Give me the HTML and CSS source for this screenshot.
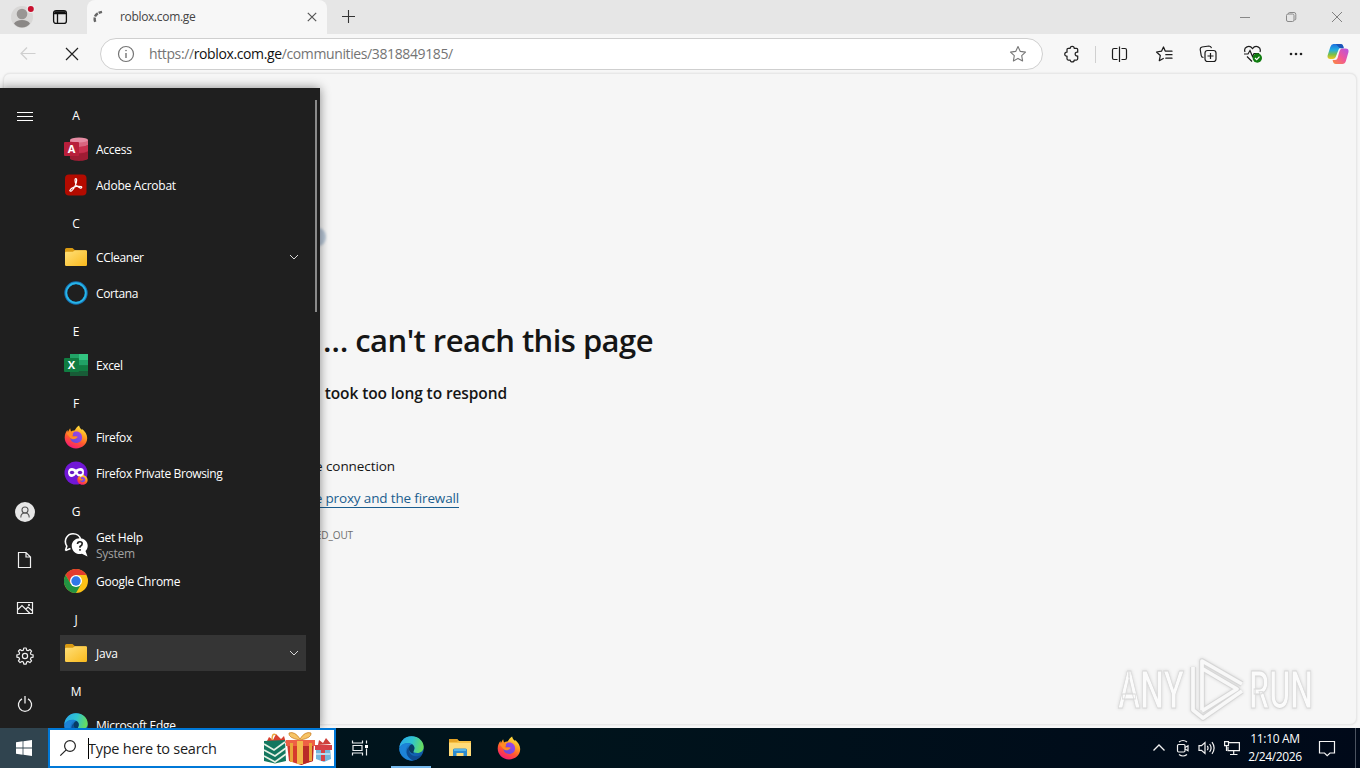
FILE: index.html
```html
<!DOCTYPE html>
<html lang="en">
<head>
<meta charset="utf-8">
<title>roblox.com.ge</title>
<link rel="stylesheet" href="styles.css">
</head>
<body>
<svg class="defs" aria-hidden="true">
  <defs>
    <linearGradient id="gFolder" x1="0" y1="0" x2="1" y2="1"><stop offset="0" stop-color="#ffe07a"/><stop offset="1" stop-color="#f9b91c"/></linearGradient>
    <linearGradient id="gFox" x1=".8" y1="0" x2=".3" y2="1"><stop offset="0" stop-color="#fff04a"/><stop offset=".35" stop-color="#ffa51f"/><stop offset=".65" stop-color="#ff5630"/><stop offset="1" stop-color="#f5157a"/></linearGradient>
    <linearGradient id="gFoxIn" x1="1" y1="0" x2="0" y2="1"><stop offset="0" stop-color="#a842e8"/><stop offset="1" stop-color="#5a4fd8"/></linearGradient>
    <linearGradient id="gEdgeTop" x1="0" y1=".3" x2="1" y2=".5"><stop offset="0" stop-color="#2aa9ea"/><stop offset=".5" stop-color="#2fc4cf"/><stop offset="1" stop-color="#6ade58"/></linearGradient>
    <linearGradient id="gEdgeLow" x1="0" y1="0" x2="1" y2="1"><stop offset="0" stop-color="#1f8fe0"/><stop offset="1" stop-color="#0c4e9c"/></linearGradient>
    <linearGradient id="gCopA" x1="0" y1="0" x2="0" y2="1"><stop offset="0" stop-color="#1c6fe0"/><stop offset=".4" stop-color="#22aee0"/><stop offset=".7" stop-color="#7cc04a"/><stop offset="1" stop-color="#f5c81e"/></linearGradient>
    <linearGradient id="gCopB" x1="1" y1="0" x2="0" y2="1"><stop offset="0" stop-color="#b253e6"/><stop offset=".5" stop-color="#f0569a"/><stop offset="1" stop-color="#fb8c3c"/></linearGradient>
  </defs>
  <symbol id="folder" viewBox="0 0 24 24"><path d="M1 4.500q0-1.500 1.500-1.500h6l2.500 2.200h10.500q1.500 0 1.500 1.500V12H1z" fill="#d99a12"/><path d="M1 8q0-1.200 1.300-1.200h6.500l2.200-1.500h10.700q1.300 0 1.300 1.300v13.200q0 1.200-1.200 1.200H2.200q-1.200 0-1.200-1.200z" fill="url(#gFolder)"/></symbol>
  <symbol id="down" viewBox="0 0 12 12"><path d="M2 4l4 4 4-4" fill="none" stroke="#d8d8d8" stroke-width="1"/></symbol>
  <symbol id="firefox" viewBox="0 0 24 24"><path d="M12 23.500C5.600 23.500.7 18.600.7 12.600c0-3.400 1.200-5.900 2.700-7.700l.5 2 2.200-3.700.9 3.300c1-.7 2.300-1 3.500-.9 1.300-2 2.400-3.800 4.600-5.100.5 2.300 1.600 3.300 3 4.400l.2-1c2.700 2.400 4.900 5.500 4.900 9.200 0 6-5 10.400-11.200 10.400z" fill="url(#gFox)"/><path d="M10.500 6.700c4.200-1.200 7.600 1.500 7.600 5.800 0 3.200-2.600 5.500-5.800 5.500-3.500 0-5.800-2.200-6-5.200 1.200 1 2.600 1.300 4.100.7 1.200-.5 2-1.400 3.200-1.800-1-.5-2.600-.5-4.700-.5-.6-1.900.1-3.600 1.600-4.500z" fill="url(#gFoxIn)"/><path d="M2.500 8.300C5 7.300 8 7.700 9.300 9.300c-1 .3-1.400 1-1.500 2 1.800.8 4 .3 6 .5-1.300 1.800-4.100 3.900-7.400 1.300" fill="#ff8b25"/></symbol>
  <symbol id="edge" viewBox="0 0 24 24"><circle cx="12" cy="12" r="11.700" fill="url(#gEdgeLow)"/><path d="M.4 11.200C1 4.900 5.900.3 12 .3c6.700 0 11.700 4.800 11.700 10.100 0 3.900-2.800 6-6.100 6-2.300 0-4-.8-4-1.700 0-.8 1.200-1.100 1.200-3.200 0-2.500-2.800-4.700-6.200-4.700-4 0-7 2-8.200 4.400z" fill="url(#gEdgeTop)"/><path d="M8.600 9c-4 3.500-2.300 11.500 5.200 14.400C7.500 24.300.4 19.300.3 12 1.500 9 4.500 7 8.300 6.900c1.500 0 2.900.5 4 1.200-1.500-.1-2.700.2-3.700.9z" fill="#1d83d8"/><path d="M10.200 10c-2 4.300.9 9.100 5.700 9.500 2.500.2 4.400-.6 6-1.700-2 3.600-5.300 5.500-8.500 5.600C6.700 20.500 5.600 12.500 10.200 10z" fill="#0e4b92"/><path d="M14.800 11.500c0-1.400-.9-2.700-2.300-3.600-3.100.7-3.900 4.700-1.800 7.300 1 1.200 2.500 1.800 3.900 1.500-2-1.300.2-2.100.2-5.200z" fill="#073b64"/></symbol>
</svg>

<div class="screen">
  <div class="browser">
    <div class="tabstrip">
      <div class="profile">
        <svg width="26" height="26" viewBox="0 0 26 26"><circle cx="13" cy="13" r="11" fill="#d8d7d6"/><circle cx="13" cy="10" r="5.300" fill="#999694"/><path d="M5 19.500q2-3.500 8-3.500t8 3.500q-3 4-8 4t-8-4z" fill="#8b8886"/><circle cx="21.800" cy="5" r="4.100" fill="#ededed"/><circle cx="21.800" cy="5" r="3" fill="#c8102e"/></svg>
      </div>
      <svg class="workspace" width="16" height="16" viewBox="0 0 16 16" fill="none" stroke="#111" stroke-width="1.300"><rect x="1.600" y="1.600" width="12.800" height="12.800" rx="2.500"/><path d="M2 4.500h12M5.500 5v9" /><path d="M2.500 3.200h11" stroke-width="2"/></svg>
      <div class="tab">
        <svg width="14" height="14" viewBox="0 0 14 14"><path d="M3.200 11.800Q.6 4 10 1.800" fill="none" stroke="#666" stroke-width="2.400" stroke-dasharray="4.300 1"/></svg>
        <span class="tab-title">roblox.com.ge</span>
        <svg class="tab-close" width="10" height="10" viewBox="0 0 10 10"><path d="M.8.8l8.400 8.400M9.200.8L.8 9.200" stroke="#555" stroke-width="1.200"/></svg>
      </div>
      <svg class="newtab" width="14" height="14" viewBox="0 0 14 14"><path d="M6.500 0v13M0 6.500h13" stroke="#333" stroke-width="1.100"/></svg>
      <div class="winbtns">
        <svg width="12" height="12" viewBox="0 0 12 12"><path d="M1 6.500h10" stroke="#888"/></svg>
        <svg width="12" height="12" viewBox="0 0 12 12" fill="none" stroke="#8a8a8a" stroke-width="1"><rect x="1.500" y="3" width="7.500" height="7.500" rx="1.500"/><path d="M3.500 3V2.500q0-1 1-1H9q1.800 0 1.800 1.800V8q0 1-1.300 1"/></svg>
        <svg width="12" height="12" viewBox="0 0 12 12"><path d="M1 1l10 10M11 1L1 11" stroke="#808080" stroke-width="1"/></svg>
      </div>
    </div>

    <div class="toolbar">
      <svg class="back" width="16" height="14" viewBox="0 0 16 14" fill="none" stroke="#cfcfcf" stroke-width="1.200"><path d="M15.500 6.500H1M7 .5l-6 6 6 6"/></svg>
      <svg class="stop" width="14" height="14" viewBox="0 0 14 14"><path d="M1 1l12 12M13 1L1 13" stroke="#222" stroke-width="1.200"/></svg>
      <div class="address">
        <svg width="18" height="18" viewBox="0 0 18 18" fill="none" stroke="#747474" stroke-width="1.200"><circle cx="9" cy="9" r="7.500"/><path d="M9 8v5" stroke-width="1.400"/><circle cx="9" cy="5.600" r=".5" fill="#747474" stroke-width=".6"/></svg>
        <span class="url">https://<b>roblox.com.ge</b>/communities/3818849185/</span>
        <svg class="star" width="18" height="18" viewBox="0 0 18 18" fill="none" stroke="#777" stroke-width="1.100" stroke-linejoin="round"><path d="M9 1.600l2.300 4.800 5.200.7-3.800 3.600.9 5.200L9 13.400l-4.600 2.500.9-5.200L1.500 7.100l5.200-.7z"/></svg>
      </div>
      <div class="actions">
        <svg class="a1" width="18" height="18" viewBox="0 0 18 18" fill="none" stroke="#222" stroke-width="1.250" stroke-linejoin="round"><path d="M5.200 3.300h2C7.200.6 11.200.6 11.200 3.300h2.300q1.200 0 1.200 1.200v2.700c-3.200-.8-3.600 4.300 0 3.800v2.800q0 1.200-1.200 1.200h-2.300c0 2.600-4 2.600-4 0h-2Q4 15 4 13.800v-2.600c-3 .4-3-4.400 0-4V4.500q0-1.200 1.200-1.200z"/></svg>
        <i class="divider"></i>
        <svg class="a2" width="18" height="18" viewBox="0 0 18 18" fill="none" stroke="#1c1c1c" stroke-width="1.200"><path d="M6.500 3.500H3Q1.500 3.500 1.500 5v8q0 1.500 1.500 1.500h3.500M10.500 3.500H14q1.500 0 1.500 1.500v8q0 1.500-1.500 1.500h-3.500M8.500 1.500v15.500"/></svg>
        <svg class="a3" width="18" height="18" viewBox="0 0 18 18" fill="none" stroke="#1c1c1c" stroke-width="1.250" stroke-linejoin="round" stroke-linecap="round"><path d="M12.500 6.200L10.200 6 8.500 2 6.500 6.200 1.500 7l3.800 3.500-1 5.200 4-2.200M10.500 6.200H17M10.800 9.700H17M10.800 13.200H17"/></svg>
        <svg class="a4" width="18" height="18" viewBox="0 0 18 18" fill="none" stroke="#1c1c1c" stroke-width="1.200"><rect x="6" y="5.500" width="11" height="11" rx="2.500"/><path d="M11.500 8v6M8.500 11h6M4.500 12.500Q2.500 12.500 2.200 10.500L1.200 4.500Q1 2.500 3 2l7-1q2 0 2.500 2.200"/></svg>
        <svg class="a5" width="20" height="18" viewBox="0 0 20 18" fill="none" stroke="#1c1c1c" stroke-width="1.200"><path d="M2 7C.2 2 6.500-.5 9.500 3.600 12.600-.5 18.600 2 17 7M1 9h4l2-3.500 2.500 6 1.500-3h5M4 11.500l5 5"/><circle cx="14.300" cy="13" r="4.700" fill="#107c10" stroke="none"/><path d="M12 13l1.700 1.600 2.800-3" stroke="#fff"/></svg>
        <svg class="a6" width="16" height="4" viewBox="0 0 16 4" fill="#222"><circle cx="3" cy="2" r="1.300"/><circle cx="8" cy="2" r="1.300"/><circle cx="13" cy="2" r="1.300"/></svg>
        <svg class="a7" width="22" height="22" viewBox="0 0 22 22"><path d="M6.500 1h7q2 0 2.600 2l.5 1.700h-2.500q-2 0-2.600 2L9.100 13q-.8 3-3.600 3H3.200Q0 16 .6 12.600L3.300 4Q4.300 1 6.500 1z" fill="url(#gCopA)"/><path d="M12 5.500h6.500q3.500 0 3 3.400L18.900 18q-.9 3-3.500 3H8.700q-2 0-2.600-2l-.5-2h2.600q1.800 0 2.400-2l1.800-6.500q.6-2 2-3z" fill="url(#gCopB)"/><path d="M8.800 1h4.800q2 0 2.600 2l.6 2.300h-4z" fill="#1b55b8"/></svg>
      </div>
    </div>

    <div class="page">
      <div class="art"></div>
      <h1>… can't reach this page</h1>
      <p class="reason">took too long to respond</p>
      <p class="hint">e connection</p>
      <p class="hint link"><a>e proxy and the firewall</a></p>
      <p class="code">ED_OUT</p>
      <svg class="watermark" width="206" height="68" viewBox="0 0 206 68">
        <g fill="#fbfbfb" stroke="#d9d9d9" stroke-width="1"><text x="3" y="53" textLength="66" lengthAdjust="spacingAndGlyphs">ANY</text><text x="134" y="53" textLength="64" lengthAdjust="spacingAndGlyphs">RUN</text></g>
        <g fill="none" stroke-linejoin="round"><path d="M78 12V55L88 63L127 36M87 55V6L127 29M88 14L122 34L87 56" stroke="#d6d6d6" stroke-width="5.500"/><path d="M78 12V55L88 63L127 36M87 55V6L127 29M88 14L122 34L87 56" stroke="#f8f8f8" stroke-width="3.700"/></g>
      </svg>
    </div>
  </div>

  <div class="taskbar">
    <div class="start"><svg width="16" height="16" viewBox="0 0 16 16" fill="#fff"><path d="M0 2.200L6.600 1.300v6.300H0zM7.400 1.200L16 0v7.600H7.400zM0 8.400h6.600v6.300L0 13.800zM7.400 8.400H16V16l-8.600-1.200z"/></svg></div>
    <div class="search">
      <svg width="18" height="18" viewBox="0 0 18 18" fill="none" stroke="#222" stroke-width="1.200"><circle cx="11" cy="7" r="5.400"/><path d="M7.200 10.800L1.300 16.700"/></svg>
      <span class="query">Type here to search</span>
      <svg class="gifts" width="70" height="36" viewBox="0 0 70 36">
        <path d="M3 13l3-6 4 3 3-6 5 5 3-3 2 7z" fill="#d8402f"/><path d="M9 10q0-8 4-5" fill="none" stroke="#e9a23b" stroke-width="1.500"/>
        <path d="M1 11l21-1 1 21-11 2.500L1 31z" fill="#14775f"/><path d="M1 14l10 6 11-8M1 20l11 6 11-8M1 26l11 6 11-8" fill="none" stroke="#e6f1e4" stroke-width="1.700"/>
        <path d="M24 13h27l-1 18-12 4-12-4z" fill="#d63a2d"/><path d="M38 15v20l12-4V14z" fill="#b92a28"/><path d="M23 10h29v6H23z" fill="#ee6045"/>
        <path d="M34 11h6v23h-6z" fill="#f2b64b"/><path d="M27 13h3v19h-3zM46 13h3v18h-3z" fill="#e9a53a"/><path d="M37 10Q25 8 26 3q6-2 11 6 5-8 11-6 1 5-11 7z" fill="#f6c465" stroke="#cc7f24" stroke-width=".8"/>
        <path d="M53 17h14l1 12-7 3-8-3z" fill="#72b7dc"/><path d="M52 15h17v5H52z" fill="#d54146"/><path d="M58 16h4v15h-4z" fill="#d64348"/><path d="M55 15l1-5 4 3 3-5 5 6z" fill="#ce403b"/><path d="M53 24h14" stroke="#b5dbef" stroke-width="2"/>
      </svg>
    </div>
    <div class="apps">
      <div class="app"><svg width="18" height="18" viewBox="0 0 18 18" fill="none" stroke="#e9edef" stroke-width="1.200"><path d="M1.500 1.500v2.500h10V1.500M1.500 16.500V14h10v2.500M2 6.500h9v5H2zM15.500 1.500v3M15.500 9.500v7"/><path d="M14 6h3v3h-3z" fill="#fff" stroke="none"/></svg></div>
      <div class="app active"><svg width="25" height="25"><use href="#edge"/></svg></div>
      <div class="app"><svg width="24" height="20" viewBox="0 0 24 20"><path d="M1 1h8l2 2h12v15H1z" fill="#f6c044"/><path d="M1 5h22v13H1z" fill="#ffdb79"/><path d="M1 1h8l1.500 1.500L9 4H1z" fill="#e5a224"/><path d="M5 18v-6q0-1.500 1.500-1.500h11Q19 10.500 19 12v6h-3.500v-3h-7v3z" fill="#2c8bcf"/><path d="M6 11h12v2H6z" fill="#56b5e9"/></svg></div>
      <div class="app"><svg width="24" height="24"><use href="#firefox"/></svg></div>
    </div>
    <div class="tray">
      <svg width="14" height="14" viewBox="0 0 14 14" fill="none" stroke="#f2f2f2" stroke-width="1.300"><path d="M1.500 9.500L7 4l5.500 5.500"/></svg>
      <svg width="14" height="18" viewBox="0 0 14 18" fill="none" stroke="#f2f2f2" stroke-width="1.200"><rect x="1.500" y="5.500" width="7.500" height="7.500" rx="1.200"/><path d="M9 8.500l3-1.700v5L9 10M3 3q4-3 8 0M3 15.500q4 3 8 0"/></svg>
      <svg width="18" height="16" viewBox="0 0 18 16" fill="none" stroke="#f2f2f2" stroke-width="1.200"><path d="M1 5.700h2.500L7 2.500v11L3.500 10.300H1zM9.300 5.800q1.500 2.200 0 4.400M11.600 4q3 4 0 8M14 2.200q4.200 5.800 0 11.600"/></svg>
      <svg class="net" width="18" height="16" viewBox="0 0 18 16" fill="none" stroke="#f2f2f2" stroke-width="1.200"><path d="M6 2.600h10.400v8H5V7M10.700 11v3.500M7 14.500h7.500"/><path d="M1.600 1.600h3.900v4H1.600zM3.500 5.500v5.500"/></svg>
      <div class="clock"><span class="time">11:10 AM</span><span class="date">2/24/2026</span></div>
      <svg class="notify" width="18" height="18" viewBox="0 0 18 18" fill="none" stroke="#f5f5f5" stroke-width="1.200"><path d="M1.500 2.500h15V14H12l-2.800 2.700L6.500 14h-5z"/></svg>
      <i class="peek"></i>
    </div>
  </div>

  <div class="menu">
    <div class="rail">
      <svg class="burger" width="16" height="12" viewBox="0 0 16 12"><path d="M0 1.500h16M0 5.500h16M0 9.500h16" stroke="#fff" stroke-width="1"/></svg>
      <div class="rail-item"><svg width="20" height="20" viewBox="0 0 20 20"><circle cx="10" cy="10" r="10" fill="#e6e6e6"/><g fill="none" stroke="#555" stroke-width="1.100"><circle cx="10" cy="8" r="3"/><path d="M5.800 15.500q0-4.500 4.200-4.500t4.200 4.500"/></g></svg></div>
      <div class="rail-item"><svg width="16" height="18" viewBox="0 0 16 18" fill="none" stroke="#f0f0f0" stroke-width="1.200"><path d="M1.500 1.500H9L13.500 6v10.500h-12zM9 1.500V6h4.500"/></svg></div>
      <div class="rail-item"><svg width="18" height="14" viewBox="0 0 18 14" fill="none" stroke="#f0f0f0" stroke-width="1.200"><path d="M1.500 1.500h15v11h-15zM1.500 9L6 4.500l8 8M10 8l2-2 4.500 4"/><circle cx="13" cy="4" r=".5"/></svg></div>
      <div class="rail-item"><svg width="18" height="18" viewBox="0 0 18 18" fill="none" stroke="#f0f0f0" stroke-width="1.200" stroke-linejoin="round"><path d="M7.800 1h2.400l.4 2.100 1.500.6 1.800-1.200 1.700 1.700-1.200 1.800.6 1.500 2.100.4v2.300l-2.100.4-.6 1.500 1.200 1.800-1.700 1.700-1.800-1.200-1.500.6-.4 2.100H7.800l-.4-2.100-1.500-.6-1.800 1.200-1.700-1.700 1.200-1.800-.6-1.500-2.100-.4V7.900L3 7.500 3.600 6 2.400 4.200l1.700-1.700 1.800 1.200 1.500-.6z"/><circle cx="9" cy="9" r="2.600"/></svg></div>
      <div class="rail-item"><svg width="18" height="18" viewBox="0 0 18 18" fill="none" stroke="#f0f0f0" stroke-width="1.300"><path d="M6 3.900a6.600 6.600 0 1 0 6 0M9 1v7.500"/></svg></div>
    </div>
    <div class="list">
      <div class="head">A</div>
      <div class="row"><svg width="24" height="24" viewBox="0 0 24 24"><path d="M6 3v18c0 3.500 18 3.500 18 0V3z" fill="#b5243f"/><path d="M6 3v5c4 2.600 14 2.600 18 0V3z" fill="#d9657f"/><path d="M6 8c4 2.600 14 2.600 18 0v6c-4 2.600-14 2.600-18 0z" fill="#c8304e"/><path d="M6 14.500c4 2.600 14 2.600 18 0V21c0 3.500-18 3.500-18 0z" fill="#9e1c33"/><ellipse cx="15" cy="3" rx="9" ry="2.600" fill="#e58ba2"/><rect y="5" width="15" height="14" rx="1" fill="#b81f3b"/><text class="glyph" x="7.500" y="16">A</text></svg><span>Access</span></div>
      <div class="row"><svg width="24" height="24" viewBox="0 0 24 24"><rect x="1" y="1.500" width="21.500" height="21" rx="4" fill="#b30b00"/><path d="M6 17c1-2 6-4.500 11-3.500 1.500.6.500 2-1 1.400-3-1-5-4.500-5-7.900 0-1.800 1.700-1.800 1.700 0 0 3-2.700 9.200-5 10.700-1.300.8-2.300.4-1.700-.7z" fill="none" stroke="#fff" stroke-width="1.200"/></svg><span>Adobe Acrobat</span></div>
      <div class="head">C</div>
      <div class="row"><svg width="24" height="24"><use href="#folder"/></svg><span class="tight">CCleaner</span><svg class="chev" width="12" height="12"><use href="#down"/></svg></div>
      <div class="row"><svg width="24" height="24" viewBox="0 0 24 24" fill="none"><circle cx="12" cy="12" r="10.200" stroke="#1673b5" stroke-width="3"/><circle cx="12" cy="12" r="9.800" stroke="#27b6e8" stroke-width="1.700"/></svg><span class="tight">Cortana</span></div>
      <div class="head">E</div>
      <div class="row"><svg width="24" height="24" viewBox="0 0 24 24"><path d="M6 1h18v22H6z" fill="#185c37"/><path d="M6 1h9v7H6z" fill="#21a366"/><path d="M15 1h9v6h-9z" fill="#33c481"/><path d="M15 7h9v5.500h-9z" fill="#21a366"/><path d="M15 12.500h9V18h-9z" fill="#107c41"/><rect y="5" width="15" height="14" rx="1" fill="#107c41"/><text class="glyph" x="7.500" y="16">X</text></svg><span class="tight">Excel</span></div>
      <div class="head">F</div>
      <div class="row"><svg width="24" height="24"><use href="#firefox"/></svg><span class="tight">Firefox</span></div>
      <div class="row"><svg width="24" height="24" viewBox="0 0 24 24"><circle cx="12" cy="12" r="11.500" fill="#7117d6"/><path d="M4 11q.5-4 4-4 2 0 4 1.500Q14 7 16.500 7q3.500 0 3.500 4 0 5-3.800 5-2.200 0-4.200-2.800Q10 16 8 16q-4 0-4-5z" fill="#fff"/><ellipse cx="8" cy="11.500" rx="2.200" ry="1.700" fill="#6b1bc4"/><ellipse cx="16" cy="11.500" rx="2.200" ry="1.700" fill="#6b1bc4"/><svg x="13" y="13" width="11" height="11"><use href="#firefox"/></svg></svg><span class="tight">Firefox Private Browsing</span></div>
      <div class="head">G</div>
      <div class="row"><svg width="24" height="24" viewBox="0 0 24 24"><path d="M1.500 17.500l1.300-4.300C-1 7 3.500.8 9 .8c4 0 7 2.500 7.600 5.700" fill="none" stroke="#fff" stroke-width="1.600"/><path d="M1.500 17.500l5-2" stroke="#fff" stroke-width="1.600"/><path d="M15.700 5.200c4.500 0 8 3.400 8 7.500 0 2.200-.9 4-2.200 5.400l2 5.400-5.600-2.700c-5.300 1.500-10.200-2.500-10.200-8 0-4.200 3.600-7.600 8-7.600z" fill="#fff"/><path d="M13.500 11q0-2.300 2.400-2.300 2.300 0 2.300 2 0 1.600-2.200 2.800v1.300M16 16v1.700" fill="none" stroke="#1f1f1f" stroke-width="1.600"/></svg><span class="two">Get Help<small>System</small></span></div>
      <div class="row"><svg width="24" height="24" viewBox="0 0 24 24"><circle cx="12" cy="12" r="12" fill="#fbc116"/><path d="M1.600 6A12 12 0 0 1 22.400 6H12L6.800 15z" fill="#e33b2e"/><path d="M1.600 6A12 12 0 0 0 12 24l5.200-9H6.800z" fill="#229342"/><circle cx="12" cy="12" r="6" fill="#fff"/><circle cx="12" cy="12" r="4.700" fill="#2f77e8"/></svg><span>Google Chrome</span></div>
      <div class="head">J</div>
      <div class="row hover"><svg width="24" height="24"><use href="#folder"/></svg><span>Java</span><svg class="chev" width="12" height="12"><use href="#down"/></svg></div>
      <div class="head">M</div>
      <div class="row"><svg width="24" height="24"><use href="#edge"/></svg><span>Microsoft Edge</span></div>
    </div>
    <i class="scroll"></i>
  </div>
</div>
</body>
</html>
```
FILE: styles.css
```css
* { box-sizing: border-box; }
body { margin: 0; font-family: "Open Sans", "Noto Sans", sans-serif; overflow: hidden; }
svg { display: block; flex: none; }
.defs { position: absolute; width: 0; height: 0; }
.screen { position: relative; width: 1360px; height: 768px; display: flex; flex-direction: column; overflow: hidden; }

/* Browser window */
.browser { flex: 1; display: flex; flex-direction: column; background: #f7f7f7; min-height: 0; }
.tabstrip { height: 34px; background: #e6e6e6; display: flex; align-items: center; flex: none; }
.profile { margin-left: 9px; }
.workspace { margin: 0 19px 0 17px; }
.tab { width: 240px; height: 34px; background: #f7f7f7; border-radius: 8px 8px 0 0; display: flex; align-items: center; padding: 0 10px 0 5px; }
.tab-title { font-size: 12px; letter-spacing: -0.33px; color: #444; margin-left: 14px; padding-bottom: 1px; }
.tab-close { margin-left: auto; }
.newtab { margin-left: 15px; }
.winbtns { margin-left: auto; display: flex; gap: 34px; padding-right: 17px; }

.toolbar { height: 40px; display: flex; align-items: center; flex: none; }
.back { margin-left: 20px; }
.stop { margin: 0 21px 0 29px; }
.address { width: 943px; height: 32px; border: 1px solid #cfcfcf; border-radius: 16px; background: #fff; display: flex; align-items: center; padding: 0 15px 0 16px; }
.url { font-size: 14px; letter-spacing: -0.38px; color: #747474; margin-left: 14px; padding-bottom: 1px; }
.url b { font-weight: 400; color: #111; }
.star { margin-left: auto; }
.actions { display: flex; align-items: center; flex: 1; padding-left: 20px; }
.divider { width: 1px; height: 17px; background: #d0d0d0; margin: 0 15px 0 14px; }
.a3 { margin-left: 26px; }
.a4 { margin-left: 26px; }
.a5 { margin-left: 26px; }
.a6 { margin-left: 25px; }
.a7 { margin-left: 23px; }

.page { position: relative; flex: 1; margin: -1px 3px 3px; border: 1px solid #e8e8e8; border-radius: 7px; background: #f6f6f6; box-shadow: 0 0 2px #ddd; padding-top: 150px; color: #151515; min-height: 0; }
.page h1, .page p { margin: 0; text-align: right; white-space: nowrap; }
.art { width: 14px; height: 18px; margin: 4px 0 0 308px; background: #bac8d8; border-radius: 50%; filter: blur(1px); }
.page h1 { width: 649px; font-size: 31px; line-height: 40px; font-weight: 600; letter-spacing: -0.55px; margin-top: 74px; }
.page .reason { width: 503px; font-size: 15.500px; line-height: 22px; font-weight: 600; margin-top: 22px; letter-spacing: -0.1px; }
.page .hint { width: 391px; font-size: 13.500px; line-height: 20px; margin-top: 52px; letter-spacing: -0.08px; }
.page .link { width: 455px; margin-top: 12px; letter-spacing: -0.15px; }
.link a { display: inline-block; color: #1b5e8f; border-bottom: 1px solid #1b5e8f; line-height: 18px; }
.page .code { width: 349px; font-size: 10px; line-height: 16px; color: #6e6e6e; margin-top: 19px; letter-spacing: -0.1px; }
.watermark { position: absolute; right: 35px; bottom: 1px; font: 500 51px Roboto, sans-serif; filter: drop-shadow(0 0 1.500px #d4d4d4); }

/* Taskbar */
.taskbar { height: 40px; flex: none; display: flex; background: linear-gradient(90deg, #00141d 0, #00141c 40%, #000919 100%); color: #fff; }
.start { width: 48px; background: #30444f; display: flex; align-items: center; justify-content: center; }
.search { width: 288px; border: 2px solid #0078d7; background: #fff; display: flex; align-items: center; padding: 0 1px 0 9px; }
.query { font-size: 14.500px; color: #1c1c1c; border-left: 1px solid #000; line-height: 20px; margin-left: 11px; white-space: nowrap; letter-spacing: -0.25px; text-indent: -1px; padding-top: 1px; }
.gifts { margin-left: auto; }
.apps { display: flex; margin-left: -1px; }
.app { width: 49px; height: 40px; display: flex; align-items: center; justify-content: center; }
.active { border-bottom: 2px solid #76b9ed; width: 40px; margin: 0 4px 0 7px; padding-top: 2px; }
.tray { margin-left: auto; display: flex; align-items: center; gap: 8px; }
.tray > svg:first-child { margin-right: 2px; }
.net { margin: 0 1px 0 -1px; }
.clock { display: flex; flex-direction: column; width: 58px; align-items: center; font-size: 12px; line-height: 18px; letter-spacing: -0.35px; white-space: nowrap; margin-left: -4px; }
.notify { margin-left: 6px; }
.peek { width: 1px; height: 40px; background: #4b5360; margin: 0 4px 0 11px; }

/* Start menu */
.menu { position: absolute; left: 0; top: 88px; width: 320px; height: 640px; background: #1f1f1f; box-shadow: 0 0 10px rgba(0,0,0,.45); clip-path: inset(-12px -12px 0 0); display: flex; color: #fff; overflow: hidden; }
.rail { width: 50px; display: flex; flex-direction: column; align-items: center; }
.burger { margin: 23px 0 auto; }
.rail-item { height: 48px; display: flex; align-items: center; }
.list { width: 246px; margin-left: 10px; padding-top: 7px; font-size: 12px; letter-spacing: -0.25px; }
.head { height: 36px; width: 32px; padding-top: 5px; line-height: 31px; text-align: center; }
.row { height: 36px; display: flex; align-items: center; padding: 0 6px 0 4px; gap: 8px; white-space: nowrap; }
.row > svg:first-child { margin-bottom: 1px; }
.row > span { padding-top: 1px; }
.tight { letter-spacing: -0.37px; }
.hover { background: #353535; }
.chev { margin-left: auto; }
.glyph { font: 700 11px "Open Sans", sans-serif; fill: #fff; text-anchor: middle; letter-spacing: 0; }
.two { display: flex; flex-direction: column; line-height: 16px; }
.two small { font-size: 12px; color: #a2a2a2; }
.scroll { width: 2px; height: 212px; margin: 12px 0 0 9px; background: #8a8a8a; }
```
